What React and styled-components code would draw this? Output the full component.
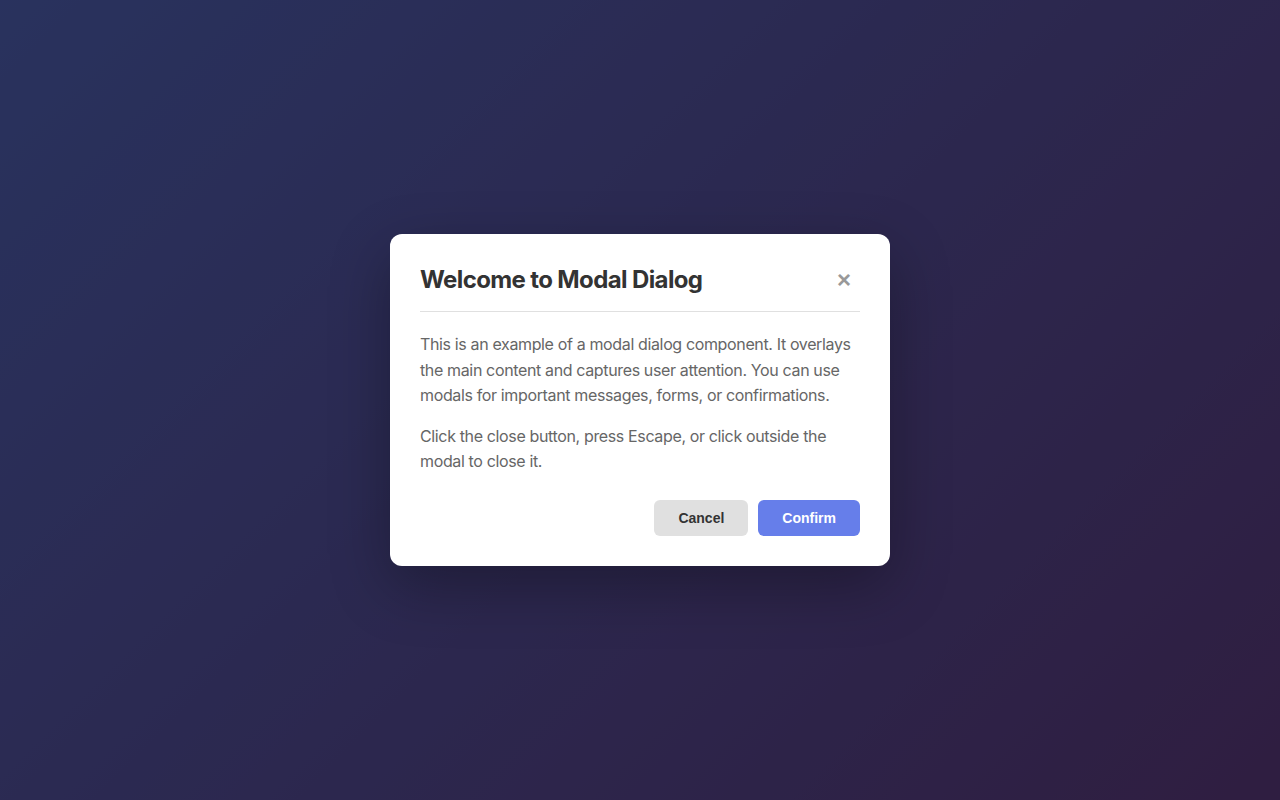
import React from "react";
import styled, { createGlobalStyle } from "styled-components";

const Global = createGlobalStyle`
  html, body { margin: 0; padding: 0; height: 100%; }
  body { font-family: Inter, "Noto Sans", sans-serif; }
  #root { height: 100%; }
`;

const Page = styled.div`
  position: relative;
  width: 100%;
  height: 100vh;
  background: linear-gradient(135deg, #667eea 0%, #764ba2 100%);
  overflow: hidden;
`;

const Overlay = styled.div`
  position: absolute;
  inset: 0;
  background: rgba(0, 0, 0, 0.6);
  display: flex;
  align-items: center;
  justify-content: center;
`;

const Modal = styled.div`
  width: 500px;
  box-sizing: border-box;
  padding: 30px;
  background: #fff;
  border-radius: 12px;
  box-shadow: 0 20px 60px rgba(0, 0, 0, 0.3);
`;

const Header = styled.div`
  display: flex;
  align-items: center;
  justify-content: space-between;
  padding-bottom: 15px;
  border-bottom: 1px solid #e0e0e0;
  margin-bottom: 20px;
`;

const Title = styled.h2`
  margin: 0;
  font-size: 24px;
  font-weight: 700;
  line-height: 1.2;
  color: #333;
  letter-spacing: -0.62px;
`;

const CloseButton = styled.button`
  width: 32px;
  height: 32px;
  padding: 0;
  border: none;
  background: none;
  color: #999;
  font-size: 24px;
  line-height: 1;
  font-family: "Liberation Sans", Arial, sans-serif;
  font-weight: 700;
  cursor: pointer;
  display: flex;
  align-items: center;
  justify-content: center;
`;

const Body = styled.div`
  color: #666;
  font-size: 16px;
  line-height: 1.6;
  letter-spacing: -0.36px;
`;

const Paragraph = styled.p`
  margin: 0 0 15px;
  &:last-child { margin-bottom: 0; }
`;

const Footer = styled.div`
  display: flex;
  justify-content: flex-end;
  gap: 10px;
  margin-top: 25px;
`;

const Button = styled.button`
  height: 36px;
  padding: 0 24px;
  border: none;
  border-radius: 6px;
  font-family: "Liberation Sans", Arial, sans-serif;
  font-size: 14px;
  font-weight: 700;
  cursor: pointer;
  background: ${(p) => (p.$primary ? "#667eea" : "#e0e0e0")};
  color: ${(p) => (p.$primary ? "#fff" : "#333")};
`;

export default function App() {
  return (
    <>
      <Global />
      <Page>
        <Overlay>
          <Modal role="dialog" aria-modal="true">
            <Header>
              <Title>Welcome to Modal Dialog</Title>
              <CloseButton aria-label="Close">×</CloseButton>
            </Header>
            <Body>
              <Paragraph>
                This is an example of a modal dialog component. It overlays the main content and
                captures user attention. You can use modals for important messages, forms, or
                confirmations.
              </Paragraph>
              <Paragraph>
                Click the close button, press Escape, or click outside the modal to close it.
              </Paragraph>
            </Body>
            <Footer>
              <Button>Cancel</Button>
              <Button $primary>Confirm</Button>
            </Footer>
          </Modal>
        </Overlay>
      </Page>
    </>
  );
}
